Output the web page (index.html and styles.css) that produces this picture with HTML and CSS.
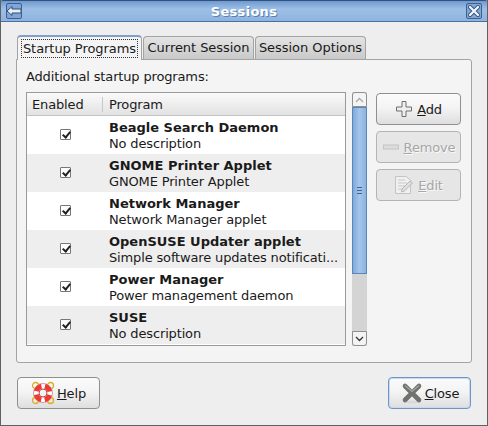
FILE: index.html
```html
<!DOCTYPE html>
<html>
<head>
    <title>Sessions</title>
    <link rel="stylesheet" href="styles.css">
</head>
<body>
    <div class="window">
        <div class="titlebar">
            <span class="wm-btn">
                <svg width="16" height="16" viewBox="0 0 16 16"><path d="M1 8 L6 3.5 V6 H15 V10 H6 V12.5 Z" fill="#e8eef6" stroke="#2f4f7a"/></svg>
            </span>
            <span class="title">Sessions</span>
            <span class="wm-btn">
                <svg width="16" height="16" viewBox="0 0 16 16"><path d="M4 4 L12 12 M12 4 L4 12" stroke="#2f4f7a" stroke-width="4" stroke-linecap="round"/><path d="M4 4 L12 12 M12 4 L4 12" stroke="#f0f4fa" stroke-width="2.4" stroke-linecap="round"/></svg>
            </span>
        </div>

        <div class="content">
            <div class="tabs">
                <div class="tab active"><span class="focus">Startup Programs</span></div>
                <div class="tab">Current Session</div>
                <div class="tab">Session Options</div>
            </div>
            <div class="panel">
                <div class="panel-label">Additional startup programs:</div>
                <div class="panel-main">
                    <div class="list">
                        <div class="list-head">
                            <div class="col-enabled">Enabled</div>
                            <div class="col-program">Program</div>
                        </div>
                        <div class="row">
                            <div class="check-cell"><span class="check"></span></div>
                            <div class="row-text"><b>Beagle Search Daemon</b><span>No description</span></div>
                        </div>
                        <div class="row alt">
                            <div class="check-cell"><span class="check"></span></div>
                            <div class="row-text"><b>GNOME Printer Applet</b><span>GNOME Printer Applet</span></div>
                        </div>
                        <div class="row">
                            <div class="check-cell"><span class="check"></span></div>
                            <div class="row-text"><b>Network Manager</b><span>Network Manager applet</span></div>
                        </div>
                        <div class="row alt">
                            <div class="check-cell"><span class="check"></span></div>
                            <div class="row-text"><b>OpenSUSE Updater applet</b><span>Simple software updates notificati...</span></div>
                        </div>
                        <div class="row">
                            <div class="check-cell"><span class="check"></span></div>
                            <div class="row-text"><b>Power Manager</b><span>Power management daemon</span></div>
                        </div>
                        <div class="row alt">
                            <div class="check-cell"><span class="check"></span></div>
                            <div class="row-text"><b>SUSE</b><span>No description</span></div>
                        </div>
                    </div>

                    <div class="scrollbar">
                        <div class="scroll-btn up">
                            <svg width="9" height="6" viewBox="0 0 9 6"><path d="M1 5 L4.5 1.5 L8 5" fill="none" stroke="#a8a8a8" stroke-width="1.3"/></svg>
                        </div>
                        <div class="scroll-thumb"><span class="grip"></span></div>
                        <div class="scroll-track"></div>
                        <div class="scroll-btn down">
                            <svg width="9" height="6" viewBox="0 0 9 6"><path d="M1 1 L4.5 4.5 L8 1" fill="none" stroke="#333" stroke-width="1.3"/></svg>
                        </div>
                    </div>

                    <div class="side-buttons">
                        <div class="btn">
                            <svg width="18" height="18" viewBox="0 0 18 18"><path d="M7 1.5 H11 V7 H16.5 V11 H11 V16.5 H7 V11 H1.5 V7 H7 Z" fill="#eeeeec" stroke="#6f6f6f"/></svg>
                            <span><u>A</u>dd</span>
                        </div>
                        <div class="btn disabled">
                            <svg width="18" height="18" viewBox="0 0 18 18"><rect x="1.5" y="7" width="15" height="4" fill="#dcdcdc" stroke="#c4c4c4"/></svg>
                            <span><u>R</u>emove</span>
                        </div>
                        <div class="btn disabled">
                            <svg width="20" height="20" viewBox="0 0 20 20"><path d="M1.5 1.5 H12 L16.5 5 V18.5 H1.5 Z" fill="#f0f0f0" stroke="#c4c4c4"/><path d="M4 5 H11 M4 8 H13 M4 11 H11 M4 14 H8" stroke="#c8c8c8"/><path d="M8 14 L16 6 L18.5 8 L10.5 16 L7.5 17 Z" fill="#dedede" stroke="#b8b8b8"/></svg>
                            <span><u>E</u>dit</span>
                        </div>
                    </div>
                </div>
            </div>

            <div class="actions">
                <div class="btn action">
                    <svg width="24" height="24" viewBox="0 0 24 24">
                        <circle cx="4.5" cy="4.5" r="3" fill="none" stroke="#d8b020" stroke-width="1.3"/>
                        <circle cx="19.5" cy="4.5" r="3" fill="none" stroke="#d8b020" stroke-width="1.3"/>
                        <circle cx="4.5" cy="19.5" r="3" fill="none" stroke="#d8b020" stroke-width="1.3"/>
                        <circle cx="19.5" cy="19.5" r="3" fill="none" stroke="#d8b020" stroke-width="1.3"/>
                        <circle cx="12" cy="12" r="9.5" fill="#ffffff" stroke="#c9a0a0"/>
                        <circle cx="12" cy="12" r="7" fill="none" stroke="#ee3a32" stroke-width="5" stroke-dasharray="7.5 3.5" stroke-dashoffset="3.75" transform="rotate(45 12 12)"/>
                        <circle cx="12" cy="12" r="4" fill="#f4f4f4" stroke="#b44"/>
                    </svg>
                    <span><u>H</u>elp</span>
                </div>
                <div class="btn action default">
                    <svg width="24" height="24" viewBox="0 0 24 24">
                        <ellipse cx="12" cy="21" rx="8" ry="1.5" fill="#d8d8d8"/>
                        <path d="M5 5 L19 19 M19 5 L5 19" stroke="#70726e" stroke-width="4.6" stroke-linecap="round"/>
                        <path d="M5 4.5 L12 10.5 L19 4.5" fill="none" stroke="#a5a7a3" stroke-width="1.2"/>
                    </svg>
                    <span><u>C</u>lose</span>
                </div>
            </div>
        </div>
    </div>
</body>
</html>
```

FILE: styles.css
```css
html, body {
    margin: 0;
    padding: 0;
}
body {
    font-family: "DejaVu Sans", sans-serif;
    font-size: 13px;
    letter-spacing: -0.15px;
    color: #1a1a1a;
    background: #eeeeee;
}
.window {
    width: 488px;
    height: 426px;
    box-sizing: border-box;
    display: flex;
    flex-direction: column;
    border-left: 1px solid #5f6163;
    border-right: 1px solid #5f6163;
    border-bottom: 1px solid #5f6163;
    overflow: hidden;
}
.titlebar {
    height: 22px;
    margin: 0 -1px;
    flex: none;
    display: flex;
    align-items: center;
    justify-content: space-between;
    padding: 0 6px;
    background: linear-gradient(#6f9ad0, #9dbfe6 40%, #8fb3de);
    border-top: 1px solid #34517a;
    border-bottom: 1px solid #4b6f9f;
    box-sizing: border-box;
    border-radius: 3px 3px 0 0;
}
.title {
    color: #ffffff;
    font-weight: bold;
    font-size: 13px;
    letter-spacing: 0.3px;
    text-shadow: 1px 1px 0 #5b7fb0;
}
.wm-btn {
    width: 16px;
    height: 16px;
    display: block;
    box-sizing: border-box;
    border: 1px solid #3d6090;
    border-radius: 2px;
    background: #80a6d8;
    overflow: hidden;
}
.wm-btn svg {
    display: block;
    margin: -1px;
}
.content {
    flex: 1;
    display: flex;
    flex-direction: column;
    padding: 13px 15px 0 15px;
}

/* tabs */
.tabs {
    display: flex;
    height: 24px;
    padding-left: 1px;
    position: relative;
    z-index: 1;
}
.tab {
    height: 23px;
    width: 111px;
    margin-top: 1px;
    box-sizing: border-box;
    padding-top: 2px;
    text-align: center;
    letter-spacing: -0.05px;
    background: linear-gradient(#e4e4e4, #c9c9c9);
    border: 1px solid #a3a3a3;
    border-bottom: none;
    border-radius: 4px 4px 0 0;
    margin-right: 1px;
    line-height: 17px;
}
.tab.active {
    width: 125px;
    height: 25px;
    margin-top: 0;
    padding-top: 2px;
    background: #f4f4f4;
    border-color: #7f9fc8 #a3a3a3 #f4f4f4;
    border-top: 2px solid #7f9fc8;
}
.focus {
    display: inline-block;
    border: 1px dotted #333;
    padding: 0 1px;
    line-height: 17px;
}
.panel {
    height: 304px;
    box-sizing: border-box;
    background: #f4f4f4;
    border: 1px solid #a3a3a3;
    border-radius: 0 3px 3px 3px;
    padding: 9px 9px 0 9px;
}
.panel-label {
    line-height: 16px;
    margin-bottom: 7px;
}
.panel-main {
    display: flex;
    align-items: flex-start;
}

/* list */
.list {
    width: 320px;
    height: 254px;
    box-sizing: border-box;
    border: 1px solid #9a9a9a;
    background: #ffffff;
    overflow: hidden;
}
.list-head {
    height: 23px;
    display: flex;
    align-items: center;
    background: linear-gradient(#fafafa, #e2e2e2);
    border-bottom: 1px solid #c4c4c4;
    box-sizing: border-box;
}
.col-enabled {
    width: 76px;
    box-sizing: border-box;
    padding-left: 5px;
    border-right: 1px solid #c8c8c8;
}
.col-program {
    padding-left: 6px;
}
.row {
    height: 38px;
    display: flex;
    align-items: center;
}
.row.alt {
    background: #eeeeee;
}
.check-cell {
    width: 77px;
    display: flex;
    justify-content: center;
    padding-bottom: 1px;
}
.check {
    width: 11px;
    height: 11px;
    box-sizing: border-box;
    border: 1px solid #777;
    border-radius: 1px;
    background: #fdfdfd;
    position: relative;
}
.check::after {
    content: "";
    position: absolute;
    left: 3px;
    top: 0;
    width: 3px;
    height: 6px;
    border: solid #222;
    border-width: 0 2px 2px 0;
    transform: rotate(40deg);
}
.row-text {
    display: flex;
    flex-direction: column;
    padding: 2px 0 0 5px;
    line-height: 16px;
    white-space: nowrap;
}
.row-text b {
    font-weight: bold;
    letter-spacing: 0;
}

/* scrollbar */
.scrollbar {
    width: 15px;
    height: 254px;
    margin-left: 6px;
    display: flex;
    flex-direction: column;
    background: #d4d4d4;
    flex: none;
}
.scroll-btn {
    height: 15px;
    box-sizing: border-box;
    display: flex;
    align-items: center;
    justify-content: center;
    background: #f4f4f4;
    border: 1px solid #8f8f8f;
}
.scroll-btn.up {
    border-radius: 3px 3px 0 0;
}
.scroll-btn.down {
    border-radius: 0 0 3px 3px;
}
.scroll-thumb {
    height: 167px;
    box-sizing: border-box;
    background: linear-gradient(90deg, #7fa9dc, #a5c6ec 50%, #8cb2e0);
    border: 1px solid #5d85b8;
    display: flex;
    align-items: center;
    justify-content: center;
}
.grip {
    width: 5px;
    height: 5px;
    border-top: 1px solid #3f648f;
    border-bottom: 1px solid #3f648f;
    position: relative;
}
.grip::after {
    content: "";
    position: absolute;
    left: 0;
    right: 0;
    top: 2px;
    height: 1px;
    background: #3f648f;
}
.scroll-track {
    flex: 1;
}

/* buttons */
.side-buttons {
    margin-left: 9px;
    display: flex;
    flex-direction: column;
    gap: 6px;
    margin-top: 1px;
}
.btn {
    width: 85px;
    height: 32px;
    box-sizing: border-box;
    display: flex;
    align-items: center;
    justify-content: center;
    gap: 4px;
    background: linear-gradient(#fbfbfb, #f4f4f4 45%, #dedede);
    border: 1px solid #8f8f8f;
    border-radius: 4px;
}
.btn.disabled {
    background: #e6e6e6;
    border-color: #b4b4b4;
    color: #a6a6a6;
    text-shadow: 1px 1px 0 #fafafa;
}
.actions {
    display: flex;
    justify-content: space-between;
    padding: 14px 1px 0 1px;
}
.btn.action {
    width: 83px;
    gap: 2px;
}
.btn.default {
    border: 1px solid #6f95c5;
    box-shadow: inset 0 0 0 1px #c8daf0;
    gap: 1px;
}
```
